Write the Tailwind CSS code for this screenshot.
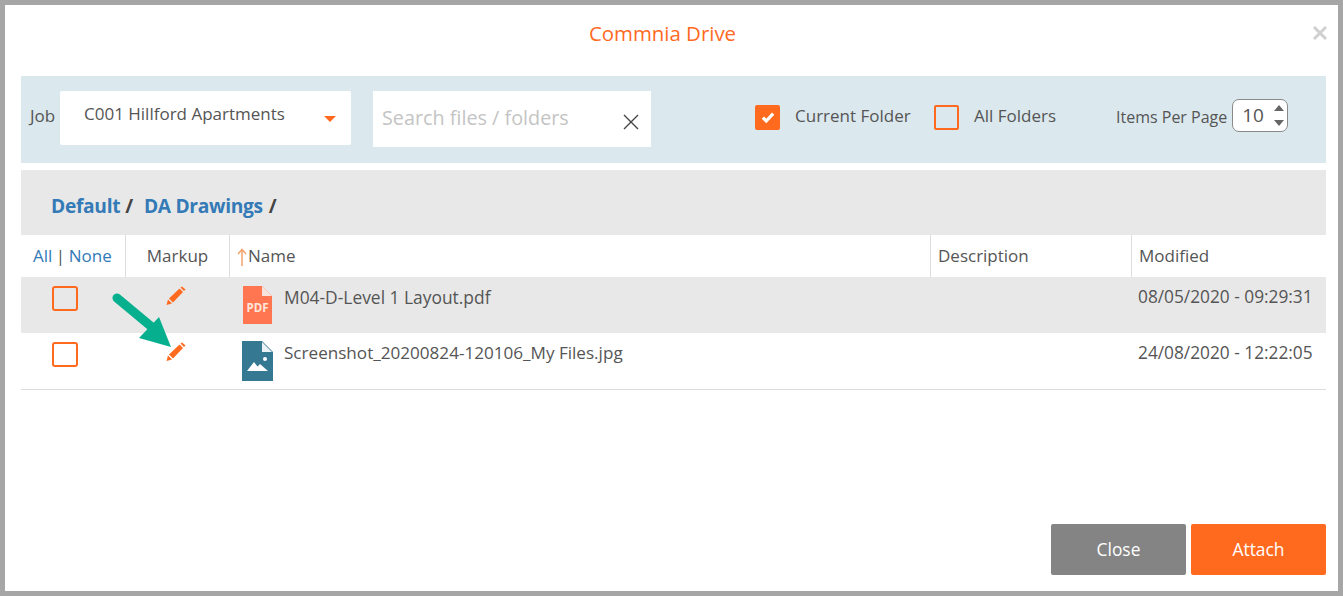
<!DOCTYPE html>
<html>
<head>
<meta charset="utf-8">
<script src="https://cdn.jsdelivr.net/npm/@tailwindcss/browser@4"></script>
</head>
<body class="m-0 overflow-hidden">
<div class="w-[1343px] h-[596px] bg-[#a6a6a6] p-[5px] font-['Open_Sans','Noto_Sans',sans-serif] text-[#555]">
  <div class="relative w-[1333px] h-[586px] bg-white flex flex-col pl-4 pr-3">
    <div class="h-[71px] flex-none flex justify-center items-center pb-[15px] pr-[22px] text-[20.4px] text-[#ff6a1f]">Commnia Drive</div>
    <svg class="absolute top-[20px] right-[10px] w-[16px] h-[16px]" viewBox="0 0 16 16"><path d="M2 2 L14 14 M14 2 L2 14" stroke="#d0d0d0" stroke-width="3"/></svg>

    <div class="h-[87px] flex-none bg-[#dbe8ed] flex items-center pl-[9px]">
      <span class="text-[17px] w-[30px] mt-[-7px]">Job</span>
      <div class="w-[291px] h-[54px] bg-white rounded-[2px] mt-[-3px] flex items-center pl-[24px] relative">
        <span class="text-[17px] mt-[-9px]">C001 Hillford Apartments</span>
        <span class="absolute left-[264px] top-[25px] w-0 h-0 border-l-[6px] border-r-[6px] border-t-[6px] border-l-transparent border-r-transparent border-t-[#ff6a1f]"></span>
      </div>
      <div class="w-[278px] h-[56px] bg-white ml-[22px] mt-[-1px] flex items-center pl-[9px] relative">
        <span class="text-[19.8px] text-[#c4c4c4] mt-[-2px]">Search files / folders</span>
        <svg class="absolute left-[250px] top-[23px] w-[16px] h-[16px]" viewBox="0 0 16 16"><path d="M1 1 L15 15 M15 1 L1 15" stroke="#444" stroke-width="1.4"/></svg>
      </div>
      <div class="w-[25px] h-[25px] ml-[104px] mt-[-5px] bg-[#ff6a1f] rounded-[2px] flex items-center justify-center">
        <svg class="w-[16px] h-[16px]" viewBox="0 0 14 14"><path d="M2.5 7.5 L5.5 10.5 L11.5 4" fill="none" stroke="#fff" stroke-width="2.8"/></svg>
      </div>
      <span class="text-[17px] ml-[15px] mt-[-7px] w-[115px] whitespace-nowrap">Current Folder</span>
      <div class="w-[25px] h-[25px] ml-[24px] mt-[-5px] border-2 border-[#ff6a1f] rounded-[2px]"></div>
      <span class="text-[17px] ml-[15px] mt-[-7px] w-[83px] whitespace-nowrap">All Folders</span>
      <span class="text-[16px] ml-[59px] mt-[-5px] whitespace-nowrap">Items Per Page</span>
      <div class="w-[56px] h-[33px] ml-[5px] mt-[-9px] bg-white border border-[#8a8a8a] rounded-[7px] flex items-center pl-[9px] relative">
        <span class="text-[19px]">10</span>
        <span class="absolute right-[3px] top-[5px] w-0 h-0 border-l-[5px] border-r-[5px] border-b-[6px] border-l-transparent border-r-transparent border-b-[#666]"></span>
        <span class="absolute right-[3px] bottom-[5px] w-0 h-0 border-l-[5px] border-r-[5px] border-t-[6px] border-l-transparent border-r-transparent border-t-[#666]"></span>
      </div>
    </div>

    <div class="h-[65px] flex-none mt-[7px] bg-[#e8e8e8] flex items-center pl-[30px] pt-[7px] text-[19.2px] font-bold tracking-[-0.3px]">
      <span class="text-[#337ab7]">Default</span><span class="text-[#444] ml-[5px]">/</span>
      <span class="text-[#337ab7] ml-[11px]">DA Drawings</span><span class="text-[#444] ml-[6px]">/</span>
    </div>

    <div class="grid grid-cols-[105px_104px_701px_201px_194px] flex-none">
      <div class="h-[42px] border-r border-[#ddd] pl-[12px] flex items-center text-[17px] pb-[1px]"><span class="text-[#337ab7]">All</span><span class="mx-[3.5px]">|</span><span class="text-[#337ab7]">None</span></div>
      <div class="h-[42px] border-r border-[#ddd] flex items-center justify-center text-[17px] pb-[1px]">Markup</div>
      <div class="h-[42px] border-r border-[#ddd] pl-[7px] flex items-center text-[17px]"><svg class="w-[10px] h-[19px] mt-[3px] flex-none" viewBox="0 0 10 19"><path d="M5 18 V2 M1 6 L5 1.5 L9 6" fill="none" stroke="#f4a46f" stroke-width="1.5"/></svg><span class="ml-[1px]">Name</span></div>
      <div class="h-[42px] border-r border-[#ddd] pl-[7px] flex items-center text-[17px] pb-[1px]">Description</div>
      <div class="h-[42px] pl-[7px] flex items-center text-[17px] pb-[1px]">Modified</div>

      <div class="h-[56px] bg-[#e8e8e8] pl-[31px] pt-[9px]"><div class="w-[26px] h-[25px] border-2 border-[#ff6a1f] rounded-[3px]"></div></div>
      <div class="h-[56px] bg-[#e8e8e8] pl-[40px] pt-[9px]">
        <svg class="w-[20px] h-[20px]" viewBox="0 0 20 20"><path d="M0.5 19 L2 13.5 L6 17.5 Z" fill="#ff6a1f"/><path d="M3 12.5 L13.5 2.5 L17 6 L7 16.5 Z" fill="#ff6a1f"/><path d="M14.5 1.5 L16 0.5 L19.5 3.5 L18 5 Z" fill="#ff6a1f"/></svg>
      </div>
      <div class="h-[56px] bg-[#e8e8e8] flex pl-[13px] pt-[9px]">
        <svg class="w-[29px] h-[38px] flex-none" viewBox="0 0 29 38"><path d="M0 0 H19 L29 10 V38 H0 Z" fill="#ff7650"/><path d="M19 0 L29 10 H19 Z" fill="#f6e3dc"/><text x="14.5" y="26" text-anchor="middle" font-size="11.5" font-weight="700" fill="#fde6dc" font-family="Open Sans">PDF</text></svg>
        <span class="text-[17.4px] ml-[12px] mt-[-2px]">M04-D-Level 1 Layout.pdf</span>
      </div>
      <div class="h-[56px] bg-[#e8e8e8]"></div>
      <div class="h-[56px] bg-[#e8e8e8] pl-[6px] pt-[7px] text-[17.3px] whitespace-nowrap">08/05/2020 - 09:29:31</div>

      <div class="h-[57px] border-b border-[#ddd] pl-[31px] pt-[9px]"><div class="w-[26px] h-[25px] border-2 border-[#ff6a1f] rounded-[3px]"></div></div>
      <div class="h-[57px] border-b border-[#ddd] pl-[40px] pt-[9px]">
        <svg class="w-[20px] h-[20px]" viewBox="0 0 20 20"><path d="M0.5 19 L2 13.5 L6 17.5 Z" fill="#ff6a1f"/><path d="M3 12.5 L13.5 2.5 L17 6 L7 16.5 Z" fill="#ff6a1f"/><path d="M14.5 1.5 L16 0.5 L19.5 3.5 L18 5 Z" fill="#ff6a1f"/></svg>
      </div>
      <div class="h-[57px] border-b border-[#ddd] flex pl-[12px] pt-[8px]">
        <svg class="w-[31px] h-[40px] flex-none" viewBox="0 0 31 40"><path d="M0 0 H20 L31 11 V40 H0 Z" fill="#347892"/><path d="M20 1 L30 11 H20 Z" fill="#eaf2f5"/><circle cx="23" cy="18" r="2" fill="#fff"/><path d="M5 30 L12 21 L15.5 25.5 L18 23 L26 30 Z" fill="#fff"/></svg>
        <span class="text-[17.1px] ml-[11px] mt-[-1px]">Screenshot_20200824-120106_My Files.jpg</span>
      </div>
      <div class="h-[57px] border-b border-[#ddd]"></div>
      <div class="h-[57px] border-b border-[#ddd] pl-[6px] pt-[7px] text-[17.3px] whitespace-nowrap">24/08/2020 - 12:22:05</div>
    </div>

    <div class="mt-[134px] flex justify-end gap-[5px]">
      <div class="w-[135px] h-[51px] rounded-[2px] bg-[#848484] text-white text-[17.4px] flex items-center justify-center">Close</div>
      <div class="w-[135px] h-[51px] rounded-[2px] bg-[#ff6a1f] text-white text-[17.4px] flex items-center justify-center">Attach</div>
    </div>

    <svg class="absolute left-[105px] top-[287px] w-[65px] h-[62px]" viewBox="0 0 65 62"><path d="M7 6 L43 36" stroke="#06b08e" stroke-width="9" stroke-linecap="round"/><path d="M29 46 L61 55 L49 25 Z" fill="#06b08e"/></svg>
  </div>
</div>
</body>
</html>
